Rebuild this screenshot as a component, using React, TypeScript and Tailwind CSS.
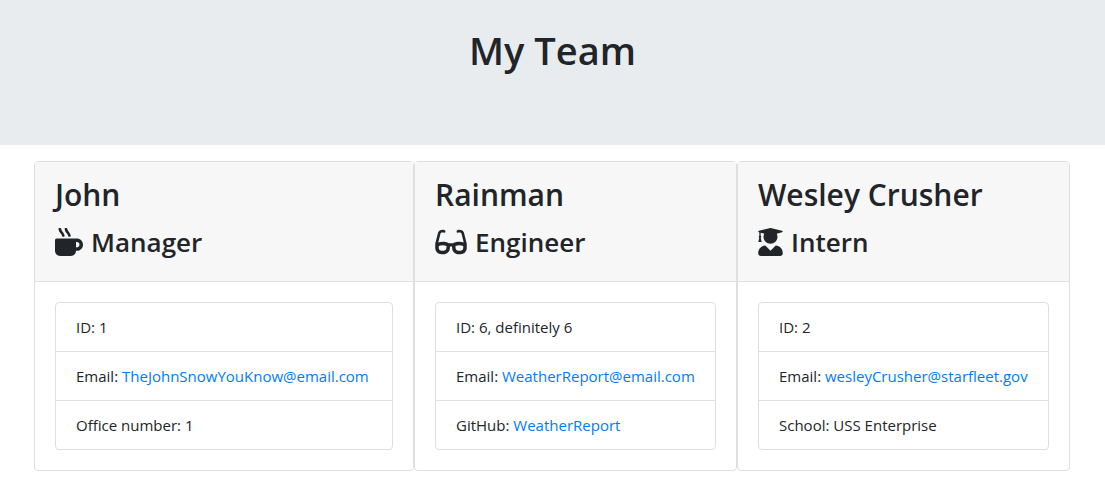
import React from "react";
import { FaMugHot, FaGlasses, FaUserGraduate } from "react-icons/fa";

type Row = { label: string; value: string; href?: string };
type Member = { name: string; role: string; icon: React.ReactNode; width: string; rows: Row[] };

const team: Member[] = [
  {
    name: "John",
    role: "Manager",
    icon: <FaMugHot aria-hidden="true" className="h-7 w-7" />,
    width: "w-[380px]",
    rows: [
      { label: "ID", value: "1" },
      { label: "Email", value: "TheJohnSnowYouKnow@email.com", href: "mailto:TheJohnSnowYouKnow@email.com" },
      { label: "Office number", value: "1" },
    ],
  },
  {
    name: "Rainman",
    role: "Engineer",
    icon: <FaGlasses aria-hidden="true" className="h-7 w-8" />,
    width: "w-[323px]",
    rows: [
      { label: "ID", value: "6, definitely 6" },
      { label: "Email", value: "WeatherReport@email.com", href: "mailto:WeatherReport@email.com" },
      { label: "GitHub", value: "WeatherReport", href: "https://github.com/WeatherReport" },
    ],
  },
  {
    name: "Wesley Crusher",
    role: "Intern",
    icon: <FaUserGraduate aria-hidden="true" className="h-7 w-[25px]" />,
    width: "w-[333px]",
    rows: [
      { label: "ID", value: "2" },
      { label: "Email", value: "wesleyCrusher@starfleet.gov", href: "mailto:wesleyCrusher@starfleet.gov" },
      { label: "School", value: "USS Enterprise" },
    ],
  },
];

function MemberCard({ name, role, icon, width, rows }: Member) {
  return (
    <article className={`${width} max-w-full rounded border border-[#dfdfdf] bg-white`}>
      <header className="border-b border-[#dfdfdf] bg-[#f7f7f7] px-5 pt-3 pb-[21px]">
        <h2 className="mb-2 text-[30px] leading-[42px] font-semibold">{name}</h2>
        <h3 className="flex items-center gap-2 text-[26px] leading-9 font-semibold">
          {icon}
          {role}
        </h3>
      </header>
      <div className="p-5">
        <ul className="divide-y divide-[#dfdfdf] rounded border border-[#dfdfdf]">
          {rows.map((row) => (
            <li key={row.label} className="px-5 py-3 leading-6">
              {row.label}:{" "}
              {row.href ? (
                <a href={row.href} className="text-[#007bff] hover:underline">{row.value}</a>
              ) : (
                row.value
              )}
            </li>
          ))}
        </ul>
      </div>
    </article>
  );
}

export default function App() {
  return (
    <div className="font-['Open_Sans','Noto_Sans',sans-serif] text-[15px] text-[#212529]">
      <header className="mb-4 bg-[#e9ecef] px-8 pt-[26px] pb-[71px] text-center">
        <h1 className="text-[38px] leading-12 font-semibold">My Team</h1>
      </header>
      <main className="flex flex-wrap justify-center pr-[17px] pl-4">
        {team.map((member) => (
          <MemberCard key={member.name} {...member} />
        ))}
      </main>
    </div>
  );
}
